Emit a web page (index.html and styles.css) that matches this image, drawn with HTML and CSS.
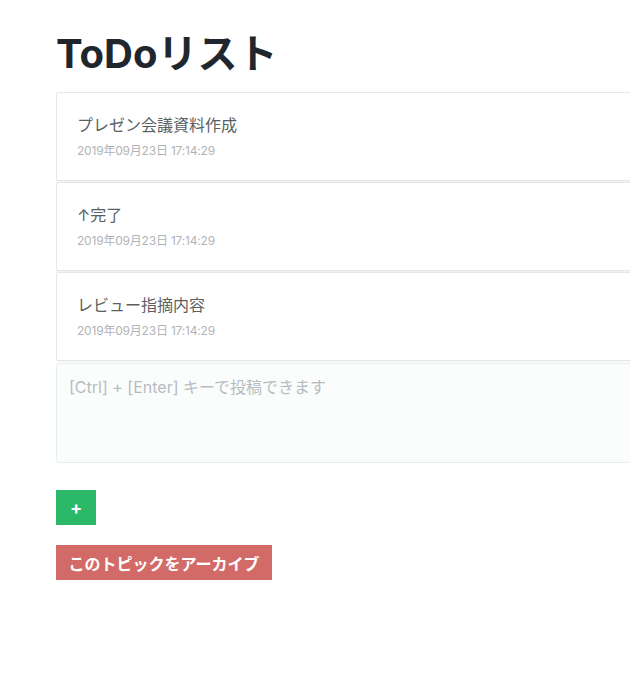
FILE: index.html
```html
<!DOCTYPE html>
<html lang="ja">
<head>
<meta charset="utf-8">
<title>ToDoリスト</title>
<link rel="stylesheet" href="styles.css">
</head>
<body>
<main class="container">
  <h1 class="title">ToDoリスト</h1>
  <ul class="todo-list">
    <li class="card">
      <p class="card-text">プレゼン会議資料作成</p>
      <p class="card-date">2019年09月23日 17:14:29</p>
    </li>
    <li class="card">
      <p class="card-text">↑完了</p>
      <p class="card-date">2019年09月23日 17:14:29</p>
    </li>
    <li class="card">
      <p class="card-text">レビュー指摘内容</p>
      <p class="card-date">2019年09月23日 17:14:29</p>
    </li>
  </ul>
  <textarea class="composer" placeholder="[Ctrl] + [Enter] キーで投稿できます"></textarea>
  <div class="actions">
    <button class="btn btn-add">+</button>
    <button class="btn btn-archive">このトピックをアーカイブ</button>
  </div>
</main>
</body>
</html>
```
FILE: styles.css
```css
html {
  overflow: hidden;
}
body {
  margin: 0;
  background: #ffffff;
  font-family: "Inter", "Noto Sans CJK JP", sans-serif;
  color: #555a5e;
}
.container {
  width: 720px;
  padding: 30px 0 0 56px;
}
.title {
  margin: 0 0 14px;
  font-size: 40px;
  line-height: 48px;
  font-weight: 700;
  color: #1f262d;
}
.todo-list {
  list-style: none;
  margin: 0;
  padding: 0;
}
.card {
  border: 1px solid #e6e7e8;
  border-radius: 2px;
  background: #fff;
  padding: 20px 20px;
  margin-bottom: 1px;
  box-shadow: 0 1px 1px rgba(0, 0, 0, 0.06);
}
.card-text {
  margin: 0;
  font-size: 16px;
  line-height: 24px;
  color: #5a5f63;
}
.card-date {
  margin: 5px 0 0;
  font-size: 12px;
  line-height: 18px;
  color: #b0b4b8;
  letter-spacing: -0.2px;
}
.composer {
  display: block;
  box-sizing: border-box;
  width: 100%;
  height: 100px;
  margin: 2px 0 0;
  padding: 11px 12px;
  border: 1px solid #e3eeee;
  border-radius: 3px;
  background: #fbfdfd;
  font-family: "Inter", "Noto Sans CJK JP", sans-serif;
  font-size: 16px;
  line-height: 24px;
  resize: none;
}
.composer::placeholder {
  color: #b6bcbf;
}
.actions {
  display: flex;
  flex-direction: column;
  align-items: flex-start;
  gap: 20px;
  margin-top: 27px;
}
.btn {
  border: none;
  border-radius: 0;
  height: 35px;
  color: #fff;
  font-family: "Inter", "Noto Sans CJK JP", sans-serif;
  font-weight: 700;
  font-size: 16px;
  padding: 0 12px;
}
.btn-add {
  width: 40px;
  background: #2bb868;
  font-size: 18px;
}
.btn-archive {
  width: 216px;
  background: #d26b67;
}
```
